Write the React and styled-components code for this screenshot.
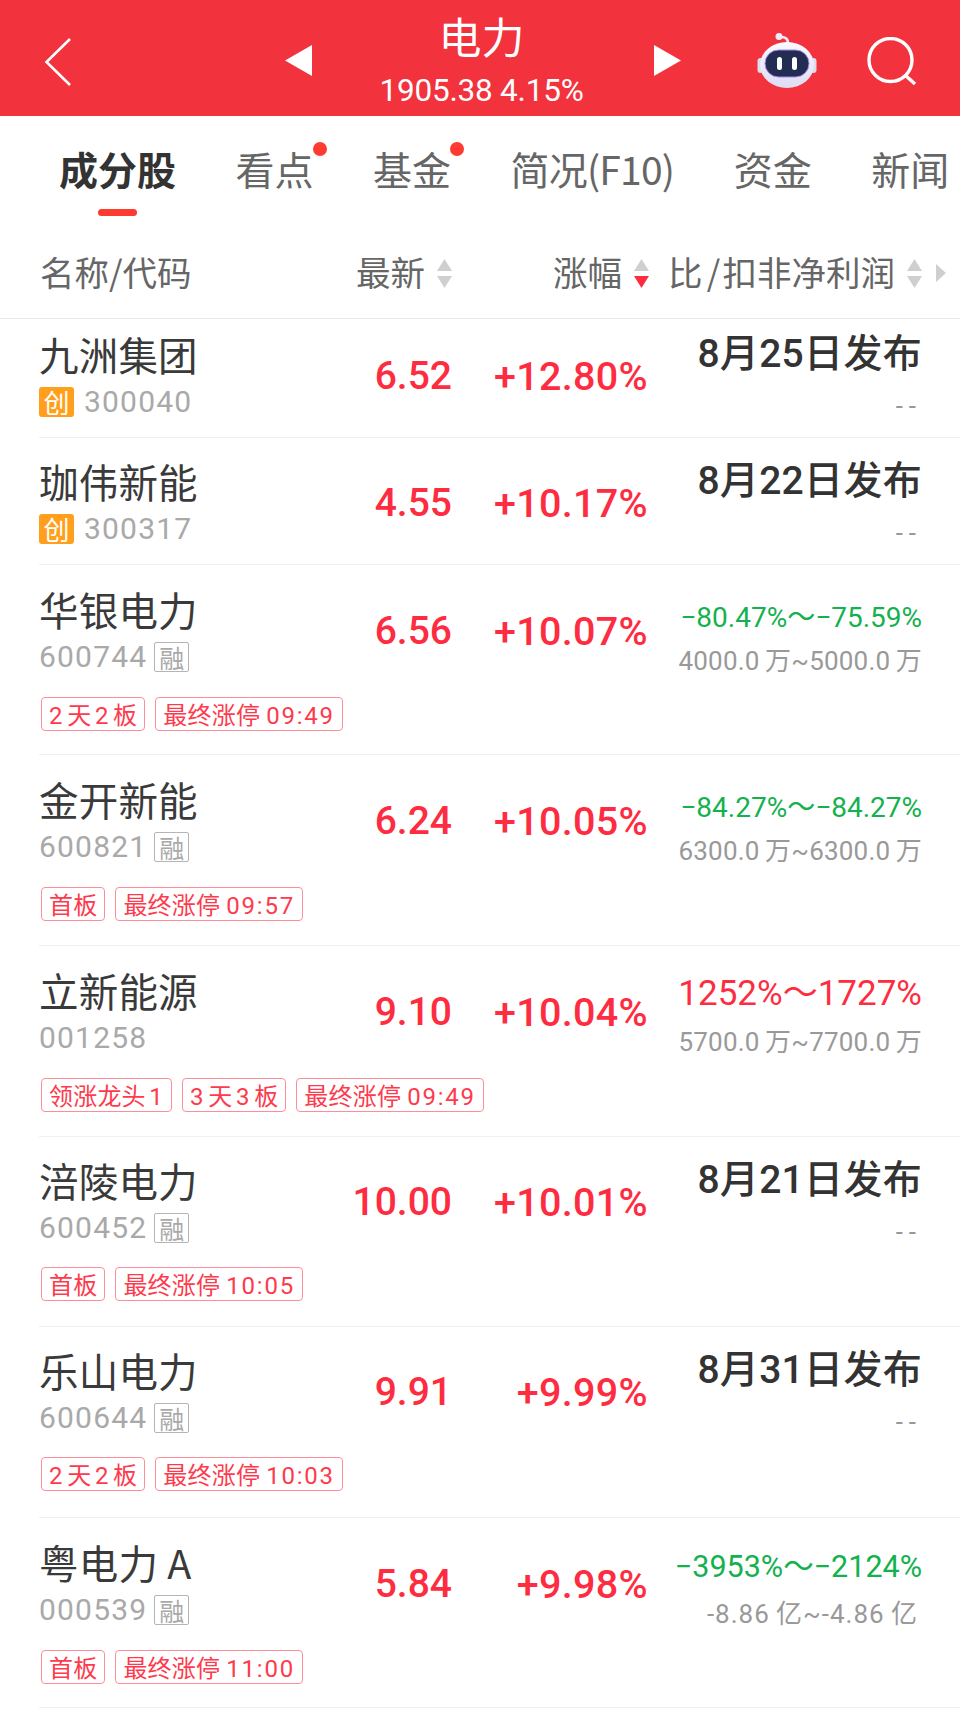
import React from "react";
import styled, { createGlobalStyle } from "styled-components";

const CJK = `"Noto Sans CJK SC", sans-serif`;
const NUM = `Roboto, "Noto Sans CJK SC", sans-serif`;
const RED = "#fe2c40";

const GlobalStyle = createGlobalStyle`
  html, body {
    margin: 0;
    padding: 0;
    background: #fff;
    overflow: hidden;
  }
`;

const Page = styled.div`
  width: 960px;
  height: 1725px;
  background: #fff;
  font-family: ${CJK};
  overflow: hidden;
`;

const TopBar = styled.div`
  height: 116px;
  background: #f2323c;
  display: grid;
  grid-template-columns: 285px 1fr 279px;
  align-items: center;
  color: #fff;
`;

const BackBtn = styled.svg`
  width: 30px;
  height: 52px;
  margin-left: 43px;
  margin-top: 8px;
`;

const TitleNav = styled.div`
  display: flex;
  align-items: center;
  justify-content: space-between;
`;

const Arrow = styled.svg`
  width: 27px;
  height: 31px;
  margin-top: 4px;
`;

const TitleBox = styled.div`
  display: flex;
  flex-direction: column;
  align-items: center;
  align-self: flex-start;
  margin-right: 3px;
`;

const Title = styled.div`
  font-size: 43px;
  line-height: 44px;
  margin-top: 4px;
`;

const SubTitle = styled.div`
  font-family: ${NUM};
  font-size: 31.5px;
  line-height: 34px;
  margin-top: 17px;
  letter-spacing: -0.2px;
`;

const TopIcons = styled.div`
  display: flex;
  align-items: center;
  padding-left: 76px;
  margin-top: 4px;
  gap: 50px;
`;

const SearchIcon = styled.svg`
  width: 50px;
  height: 50px;
  margin-top: 4px;
`;

const TabBar = styled.div`
  height: 114px;
  box-sizing: border-box;
  padding: 29px 0 0 59px;
  display: flex;
  gap: 59.5px;
  white-space: nowrap;
`;

const Tab = styled.div`
  position: relative;
  font-size: 39px;
  line-height: 46px;
  height: 46px;
  color: ${(p) => (p.$active ? "#333" : "#666")};
  font-weight: ${(p) => (p.$active ? 700 : 400)};
  letter-spacing: ${(p) => (p.$tight ? "-0.8px" : "0")};
`;

const TabLine = styled.span`
  position: absolute;
  left: 39px;
  top: 64px;
  width: 39px;
  height: 7px;
  border-radius: 4px;
  background: #fe3b30;
`;

const TabDot = styled.span`
  position: absolute;
  left: 77px;
  top: -3px;
  width: 14px;
  height: 14px;
  border-radius: 50%;
  background: #fe3b30;
`;

const ColHead = styled.div`
  height: 89px;
  box-sizing: border-box;
  padding: 0 0 7px 40px;
  border-bottom: 1px solid #e8e8e8;
  display: grid;
  grid-template-columns: 300px 113px 197px 273px 37px;
  align-items: center;
  font-size: 34.5px;
  color: #666;
  white-space: nowrap;
`;

const ColCell = styled.div`
  display: flex;
  align-items: center;
  justify-content: ${(p) => (p.$left ? "flex-start" : "flex-end")};
  gap: 11px;
`;

const SortIcon = styled.svg`
  width: 17px;
  height: 31px;
  flex: none;
  margin-top: 5px;
`;

const MoreCaret = styled.svg`
  width: 10px;
  height: 18px;
  margin: 5px 0 0 13px;
`;

const Row = styled.div`
  margin-left: 39px;
  border-bottom: 1px solid #efefef;
  padding-top: ${(p) => (p.$first ? 14 : 22)}px;
  box-sizing: border-box;
  height: ${(p) => p.$h}px;
`;

const Main = styled.div`
  display: grid;
  grid-template-columns: 253px 160px 196px 274px;
  align-items: center;
`;

const NameCol = styled.div`
  display: flex;
  flex-direction: column;
`;

const Name = styled.div`
  font-size: 39.5px;
  line-height: 48px;
  margin-top: -8px;
  color: #3a3a3a;
  white-space: nowrap;
  letter-spacing: 0.2px;
`;

const CodeLine = styled.div`
  display: flex;
  align-items: center;
  gap: 7px;
  height: 30px;
  margin-top: 9px;
`;

const Code = styled.span`
  font-family: ${NUM};
  font-size: 30px;
  letter-spacing: 1.2px;
  color: #a9a9a9;
`;

const ChuangBadge = styled.span`
  width: 35px;
  height: 30px;
  margin-right: 3px;
  border-radius: 3px;
  background: #ff9f1c;
  color: #fff;
  font-size: 26px;
  line-height: 30px;
  text-align: center;
`;

const RongBadge = styled.span`
  width: 33px;
  height: 28px;
  border: 1px solid #b5b5b5;
  border-radius: 2px;
  color: #a9a9a9;
  font-size: 25px;
  line-height: 28px;
  text-align: center;
`;

const Price = styled.div`
  font-family: ${NUM};
  font-weight: 500;
  font-size: 39px;
  margin-top: -2px;
  color: ${RED};
  text-align: right;
`;

const Pct = styled(Price)`
  font-size: 39.5px;
  letter-spacing: 0.3px;
`;

const RightCol = styled.div`
  display: flex;
  flex-direction: column;
  align-items: flex-end;
  align-self: start;
  white-space: nowrap;
`;

const DateText = styled.div`
  font-family: ${NUM};
  font-weight: 500;
  font-size: 39px;
  line-height: 50px;
  margin-top: -4px;
  color: #333;
  letter-spacing: 0.3px;
`;

const Dashes = styled.div`
  font-family: ${NUM};
  font-size: 26px;
  line-height: 30px;
  margin-top: 12px;
  color: #999;
  letter-spacing: 6px;
`;

const RangeText = styled.div`
  font-family: ${NUM};
  font-size: ${(p) => p.$size}px;
  line-height: 38px;
  margin-top: ${(p) => 12 - p.$lift}px;
  margin-bottom: ${(p) => p.$lift}px;
  color: ${(p) => (p.$red ? RED : "#14b14f")};
`;

const RangeSub = styled.div`
  font-family: ${NUM};
  font-size: 26px;
  line-height: 32px;
  margin-top: 8px;
  margin-right: ${(p) => (p.$wide ? 4 : 0)}px;
  color: #999;
  letter-spacing: ${(p) => (p.$wide ? 1 : 0.2)}px;
`;

const TagRow = styled.div`
  display: flex;
  gap: 10px;
  padding-left: 2px;
  margin-top: 20px;
`;

const Tag = styled.span`
  height: 34px;
  box-sizing: border-box;
  padding: 0 7px;
  border: 1px solid #ff8d98;
  border-radius: 4px;
  color: #fe3a4c;
  font-size: 24px;
  line-height: 32px;
  letter-spacing: 0.2px;
  white-space: nowrap;
`;

const TagNum = styled.span`
  font-family: ${NUM};
  letter-spacing: ${(p) => (p.$time ? 1.8 : 1.2)}px;
  margin-left: ${(p) => (p.$lead ? 0 : p.$time ? 6 : 3.5)}px;
  margin-right: ${(p) => (p.$tail ? 0 : 3.5)}px;
`;

const stocks = [
  { name: "九洲集团", code: "300040", badge: "创", price: "6.52", pct: "+12.80%", date: "8月25日发布" },
  { name: "珈伟新能", code: "300317", badge: "创", price: "4.55", pct: "+10.17%", date: "8月22日发布" },
  { name: "华银电力", code: "600744", badge: "融", price: "6.56", pct: "+10.07%", range: "−80.47%～−75.59%", size: 28, lift: 0, sub: "4000.0\u2009万~5000.0\u2009万", tags: ["2天2板", "最终涨停09:49"] },
  { name: "金开新能", code: "600821", badge: "融", price: "6.24", pct: "+10.05%", range: "−84.27%～−84.27%", size: 28, lift: 0, sub: "6300.0\u2009万~6300.0\u2009万", tags: ["首板", "最终涨停09:57"] },
  { name: "立新能源", code: "001258", price: "9.10", pct: "+10.04%", range: "1252%～1727%", size: 35, lift: 5, red: true, sub: "5700.0\u2009万~7700.0\u2009万", tags: ["领涨龙头1", "3天3板", "最终涨停09:49"] },
  { name: "涪陵电力", code: "600452", badge: "融", price: "10.00", pct: "+10.01%", date: "8月21日发布", tags: ["首板", "最终涨停10:05"] },
  { name: "乐山电力", code: "600644", badge: "融", price: "9.91", pct: "+9.99%", date: "8月31日发布", tags: ["2天2板", "最终涨停10:03"] },
  { name: "粤电力 A", code: "000539", badge: "融", price: "5.84", pct: "+9.98%", range: "−3953%～−2124%", size: 30.5, lift: 4, sub: "-8.86\u2009亿~-4.86\u2009亿", wide: true, tags: ["首板", "最终涨停11:00"] },
];

const heights = [119, 127, 190, 191, 191, 190, 191, 190];

// digits in a tag sit apart from the hanzi around them
function TagText({ text }) {
  const parts = text.split(/([0-9:]+)/);
  return parts.map((part, i) =>
    i % 2 === 1 ? (
      <TagNum
        key={i}
        $time={part.length > 1}
        $lead={i === 1 && parts[0] === ""}
        $tail={i === parts.length - 2 && parts[i + 1] === ""}
      >
        {part}
      </TagNum>
    ) : (
      part
    )
  );
}

function Sort({ active }) {
  return (
    <SortIcon viewBox="0 0 17 31">
      <path d="M8.5 1 L16 13 H1 Z" fill="#cfcfcf" />
      <path d="M8.5 30 L16 18 H1 Z" fill={active ? "#fe2c40" : "#cfcfcf"} />
    </SortIcon>
  );
}

function Robot() {
  return (
    <svg width="60" height="55" viewBox="0 0 60 55">
      <defs>
        <linearGradient id="shell" x1="0" y1="0" x2="0" y2="1">
          <stop offset="0" stopColor="#fafaff" />
          <stop offset="1" stopColor="#dedcf2" />
        </linearGradient>
      </defs>
      <path d="M31 10 C31 5 28 4 24 4" stroke="#ecebf7" strokeWidth="2.5" fill="none" />
      <circle cx="22" cy="3.5" r="3.5" fill="#ecebf7" />
      <rect x="0.5" y="25" width="6" height="15" rx="3" fill="#dcdcf0" />
      <rect x="53.5" y="25" width="6" height="15" rx="3" fill="#dcdcf0" />
      <ellipse cx="30" cy="32" rx="27" ry="23" fill="url(#shell)" />
      <rect x="8" y="17" width="44" height="27" rx="13.5" fill="#232c52" stroke="#a48ae8" strokeWidth="1" />
      <rect x="20" y="24" width="5" height="13" rx="2.5" fill="#fff" />
      <rect x="35" y="24" width="5" height="13" rx="2.5" fill="#fff" />
    </svg>
  );
}

function StockRow({ s, index }) {
  return (
    <Row $first={index === 0} $h={heights[index]}>
      <Main>
        <NameCol>
          <Name>{s.name}</Name>
          <CodeLine>
            {s.badge === "创" && <ChuangBadge>创</ChuangBadge>}
            <Code>{s.code}</Code>
            {s.badge === "融" && <RongBadge>融</RongBadge>}
          </CodeLine>
        </NameCol>
        <Price>{s.price}</Price>
        <Pct>{s.pct}</Pct>
        <RightCol>
          {s.date ? (
            <>
              <DateText>{s.date}</DateText>
              <Dashes>--</Dashes>
            </>
          ) : (
            <>
              <RangeText $red={s.red} $size={s.size} $lift={s.lift}>{s.range}</RangeText>
              <RangeSub $wide={s.wide}>{s.sub}</RangeSub>
            </>
          )}
        </RightCol>
      </Main>
      {s.tags && (
        <TagRow>
          {s.tags.map((t) => (
            <Tag key={t}>
              <TagText text={t} />
            </Tag>
          ))}
        </TagRow>
      )}
    </Row>
  );
}

export default function App() {
  return (
    <Page>
      <GlobalStyle />
      <TopBar>
        <BackBtn viewBox="0 0 30 52">
          <path d="M27 3 L3.5 26 L27 49" fill="none" stroke="#fff" strokeWidth="2.6" />
        </BackBtn>
        <TitleNav>
          <Arrow viewBox="0 0 27 31">
            <path d="M27 0 V31 L0 15.5 Z" fill="#fff" />
          </Arrow>
          <TitleBox>
            <Title>电力</Title>
            <SubTitle>1905.38 4.15%</SubTitle>
          </TitleBox>
          <Arrow viewBox="0 0 27 31">
            <path d="M0 0 V31 L27 15.5 Z" fill="#fff" />
          </Arrow>
        </TitleNav>
        <TopIcons>
          <Robot />
          <SearchIcon viewBox="0 0 50 50">
            <circle cx="23.5" cy="23" r="21.5" fill="none" stroke="#fff" strokeWidth="3.4" />
            <path d="M38 38 L48 47" stroke="#fff" strokeWidth="3.4" />
          </SearchIcon>
        </TopIcons>
      </TopBar>
      <TabBar>
        <Tab $active>
          成分股
          <TabLine />
        </Tab>
        <Tab>
          看点
          <TabDot />
        </Tab>
        <Tab>
          基金
          <TabDot />
        </Tab>
        <Tab $tight>简况(F10)</Tab>
        <Tab>资金</Tab>
        <Tab>新闻</Tab>
      </TabBar>
      <ColHead>
        <ColCell $left>名称/代码</ColCell>
        <ColCell>
          最新
          <Sort />
        </ColCell>
        <ColCell>
          涨幅
          <Sort active />
        </ColCell>
        <ColCell>
          比{"\u200a\u200a"}/{"\u200a"}扣非净利润
          <Sort />
        </ColCell>
        <MoreCaret viewBox="0 0 10 18">
          <path d="M0 0 L10 9 L0 18 Z" fill="#cfcfcf" />
        </MoreCaret>
      </ColHead>
      {stocks.map((s, i) => (
        <StockRow key={s.code} s={s} index={i} />
      ))}
    </Page>
  );
}
